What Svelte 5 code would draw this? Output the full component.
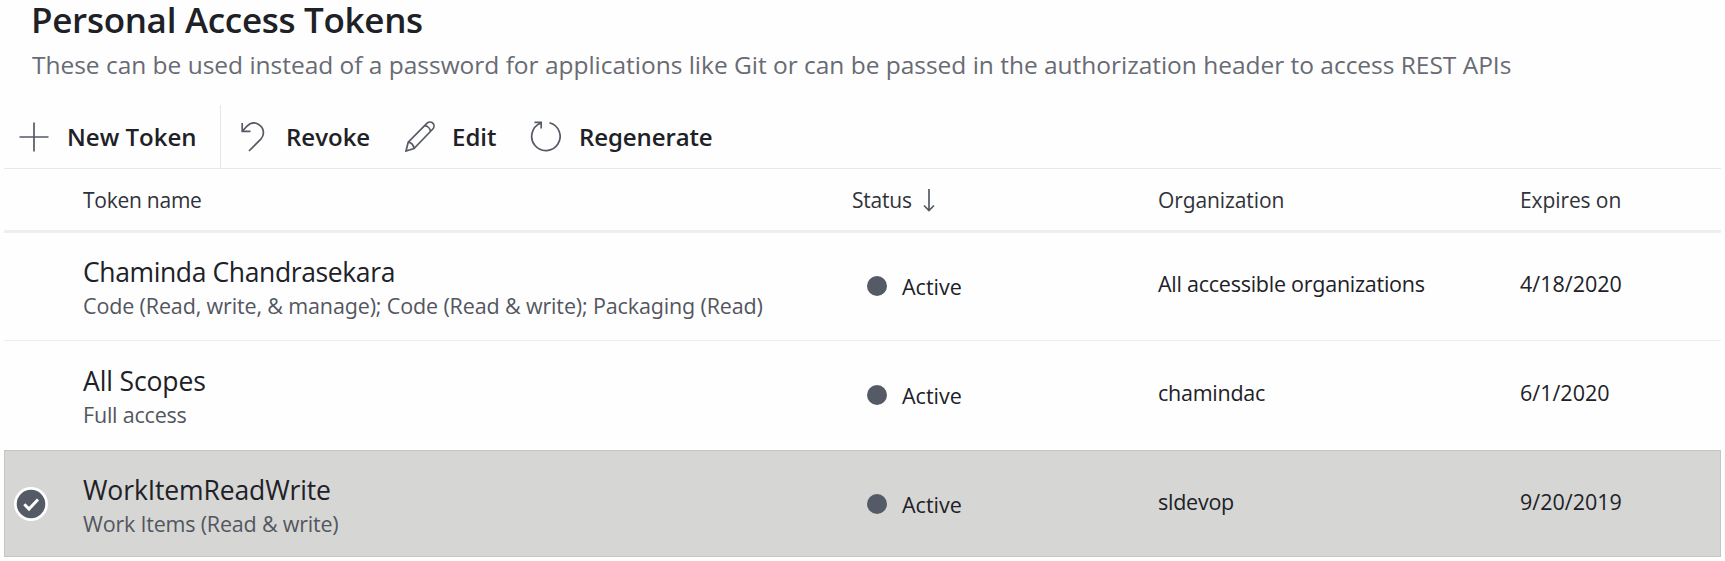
<script>
  const tokens = [
    { name: 'Chaminda Chandrasekara', scope: 'Code (Read, write, & manage); Code (Read & write); Packaging (Read)', org: 'All accessible organizations', expires: '4/18/2020' },
    { name: 'All Scopes', scope: 'Full access', org: 'chamindac', expires: '6/1/2020' },
    { name: 'WorkItemReadWrite', scope: 'Work Items (Read & write)', org: 'sldevop', expires: '9/20/2019', selected: true }
  ];
</script>

<main>
  <h1>Personal Access Tokens</h1>
  <p class="desc">These can be used instead of a password for applications like Git or can be passed in the authorization header to access REST APIs</p>

  <div class="toolbar">
    <button class="new">
      <svg width="30" height="30" viewBox="0 0 30 30"><path d="M15 0.5V29.5M0.5 15H29.5" /></svg>
      New Token
    </button>
    <button class="revoke">
      <svg width="24" height="30" viewBox="0 0 24 30"><path d="M1.2 1V9.3H9.5M1.5 9L6 4.2C9 .9 13.5.1 17.3 2.2C22.8 5.2 24.2 12.4 19.8 17.2L8 29" /></svg>
      Revoke
    </button>
    <button class="edit">
      <svg width="30" height="31" viewBox="0 0 30 31"><path d="M1 30L3.2 21.2L22.1 2.2C23.7 .6 26.2 .6 27.8 2.2S29.4 6.4 27.8 8L9 27.5ZM3.2 21.2C6.3 21.7 8.5 24 9 27.5M19.6 4.7C22.6 4.9 25.2 7.4 25.5 10.4" /></svg>
      Edit
    </button>
    <button class="regen">
      <svg width="31" height="31" viewBox="0 0 31 31"><path d="M19.5 1.7A14.2 14.2 0 1 1 10.5 2.3M4.5 1.3H11.2V7.5" /></svg>
      Regenerate
    </button>
  </div>

  <div class="row head">
    <span></span>
    <span>Token name</span>
    <span class="sort">Status
      <svg width="12" height="23" viewBox="0 0 12 23"><path d="M6 0V21.5M1 16.5L6 21.5L11 16.5" /></svg>
    </span>
    <span>Organization</span>
    <span>Expires on</span>
  </div>

  {#each tokens as t}
    <div class="row item" class:selected={t.selected}>
      <span class="mark">
        {#if t.selected}
          <svg width="34" height="34" viewBox="0 0 34 34"><circle cx="17" cy="17" r="17" fill="#fff" /><circle cx="17" cy="17" r="14.3" fill="#555b66" /><path d="M10.3 17.3L15 22L24 12.5" /></svg>
        {/if}
      </span>
      <div class="token"><div class="name">{t.name}</div><div class="scope">{t.scope}</div></div>
      <div class="status"><i></i><span>Active</span></div>
      <span class="cell">{t.org}</span>
      <span class="cell date">{t.expires}</span>
    </div>
  {/each}
</main>

<style>
  :global(body) { margin: 0; background: #fefefe; }
  main { width: 1725px; height: 561px; overflow: hidden; box-sizing: border-box; padding: 0 4px; font-family: "Open Sans", "Noto Sans", sans-serif; font-feature-settings: "ss02"; color: #202127; white-space: nowrap; }
  h1 { margin: 0 0 8px 27px; font-size: 35px; line-height: 39px; font-weight: 600; letter-spacing: -0.3px; }
  .desc { margin: 0 0 23px 28px; font-size: 24.5px; line-height: 35px; letter-spacing: -0.02px; color: #686b73; }
  .toolbar { display: flex; height: 63px; border-bottom: 1px solid #e9e9e9; }
  button { display: flex; align-items: center; padding: 0; border: 0; background: none; font: 600 24px "Open Sans", "Noto Sans", sans-serif; font-feature-settings: "ss02"; color: #202127; }
  button svg { flex: none; }
  svg path { fill: none; stroke: #555a64; stroke-width: 1.7; }
  .new { box-sizing: border-box; width: 217px; padding-left: 15px; gap: 18px; border-right: 1px solid #e6e6e6; }
  .revoke { width: 184px; padding-left: 20px; gap: 21px; box-sizing: border-box; }
  .edit { width: 125px; gap: 17px; }
  .regen { gap: 18px; letter-spacing: -0.1px; }
  .row { display: grid; grid-template-columns: 79px 769px 306px 362px 1fr; }
  .head { height: 60px; padding-top: 1px; align-items: center; border-bottom: 3px solid #eeeeed; font-size: 21px; letter-spacing: -0.1px; color: #303239; }
  .head span:nth-child(2) { letter-spacing: -0.25px; }
  .sort { display: flex; align-items: center; gap: 11px; letter-spacing: -0.2px; }
  .item { box-sizing: border-box; height: 108px; padding-top: 21px; align-items: start; border-bottom: 1px solid #ebebeb; font-size: 21.5px; }
  .item + .item { height: 109px; padding-top: 22px; border-bottom: 0; }
  .item.selected { height: 107px; padding-top: 21px; background: #d6d6d4; border: 1px solid #c5c5c5; grid-template-columns: 78px 769px 306px 362px 1fr; }
  .mark { padding: 15px 0 0 9px; line-height: 0; }
  .mark path { stroke: #fff; stroke-width: 3; }
  .name { font-size: 26.5px; line-height: 36px; letter-spacing: -0.38px; }
  .item + .item .name { letter-spacing: -0.12px; }
  .scope { line-height: 31px; letter-spacing: -0.14px; color: #53565f; }
  .item + .item .scope { letter-spacing: -0.2px; }
  .status { display: flex; align-items: center; padding: 17px 0 0 15px; gap: 15px; line-height: 32px; }
  .status i { width: 20px; height: 20px; border-radius: 50%; background: #555b66; margin-top: -2px; }
  .cell { padding-top: 15px; line-height: 30px; letter-spacing: -0.25px; }
  .date { letter-spacing: 0; }
</style>
